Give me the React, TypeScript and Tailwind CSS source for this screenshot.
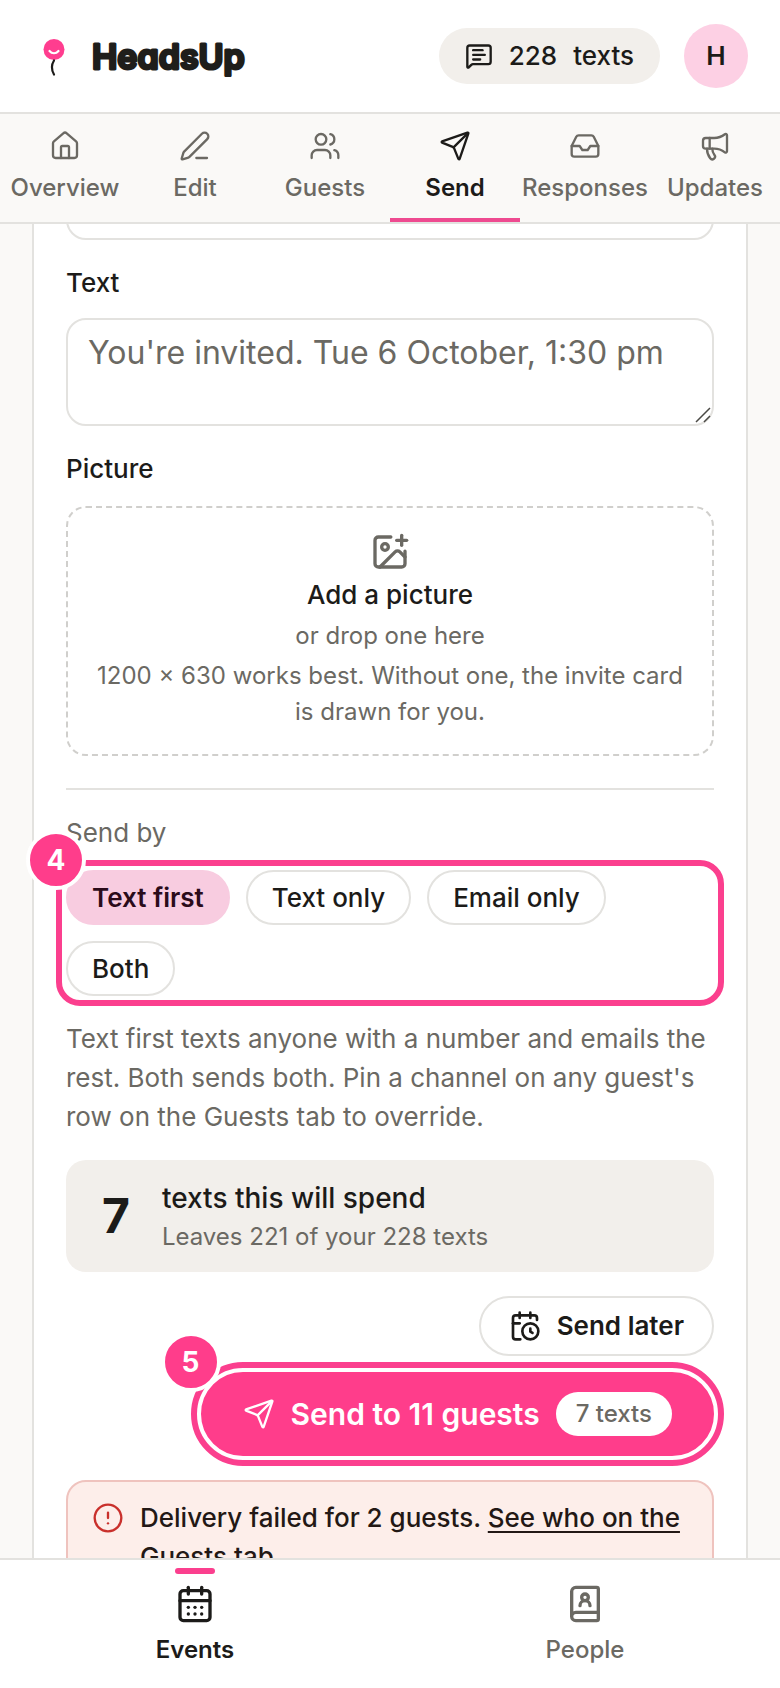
import { useState } from 'react';
import type { ReactNode } from 'react';
import {
  BookUser, CalendarClock, CalendarDays, CircleAlert, House, ImagePlus, Inbox,
  Megaphone, MessageSquareText, PenLine, Send, Users,
} from 'lucide-react';

const TABS = [
  { label: 'Overview', icon: House },
  { label: 'Edit', icon: PenLine },
  { label: 'Guests', icon: Users },
  { label: 'Send', icon: Send },
  { label: 'Responses', icon: Inbox },
  { label: 'Updates', icon: Megaphone },
];

const SECTIONS = [
  { label: 'Events', icon: CalendarDays },
  { label: 'People', icon: BookUser },
];

const CHANNELS = ['Text first', 'Text only', 'Email only', 'Both'];

function Logo() {
  return (
    <a href="#home" aria-label="HeadsUp">
      <svg width="216" height="64" viewBox="0 0 216 64">
        <circle cx="22" cy="25.5" r="10.5" fill="#ff3d8f" />
        <path d="M17.5 27c2.5 3 6.5 3 9 0" fill="none" stroke="#fff" strokeWidth="2.2" strokeLinecap="round" />
        <path d="M22 36.5c-2.8 4.5-2.6 9.5 0 14" fill="none" stroke="#1c1b19" strokeWidth="2.2" strokeLinecap="round" />
        <text
          x="60"
          y="45"
          fill="#1f1e1b"
          stroke="#1f1e1b"
          strokeWidth="3"
          strokeLinejoin="round"
          className="font-['Inter',sans-serif] text-[34px] font-semibold [font-feature-settings:'cv11']"
        >
          HeadsUp
        </text>
      </svg>
    </a>
  );
}

/* Numbered outline that points at one step of the form */
function Callout({ step, round, children }: { step: number; round?: boolean; children: ReactNode }) {
  return (
    <div className="relative">
      {children}
      <div
        className={`pointer-events-none absolute -inset-2.5 border-[6px] border-[#fb3f8e] ${round ? 'rounded-full' : 'rounded-3xl'}`}
      />
      <span className="absolute -top-10 -left-10 flex size-15 items-center justify-center rounded-full border-4 border-white bg-[#ff3d8b] text-[28px] font-bold text-white">
        {step}
      </span>
    </div>
  );
}

export default function App() {
  const [channel, setChannel] = useState('Text first');
  const [message, setMessage] = useState('');

  return (
    <div className="flex h-screen flex-col bg-[#faf9f7] font-['Inter',sans-serif] text-[26px] leading-[38px] text-[#1c1b19]">
      <header className="flex shrink-0 items-center justify-between border-b-2 border-[#e3e2df] bg-white px-8 py-6">
        <Logo />
        <div className="flex items-center gap-6">
          <a href="#texts" className="flex h-14 items-center gap-4 rounded-full bg-[#f2efeb] px-6.5 font-medium">
            <MessageSquareText size={28} strokeWidth={2} />
            <span>228</span>
            <span>texts</span>
          </a>
          <button className="size-16 rounded-full bg-[#fdd0e4] font-semibold">H</button>
        </div>
      </header>

      <nav className="grid shrink-0 grid-cols-6 border-b-2 border-[#e3e2df]">
        {TABS.map(({ label, icon: Icon }) => (
          <a
            key={label}
            href={`#${label.toLowerCase()}`}
            className={`flex flex-col items-center gap-2 border-b-4 pt-4 pb-3 text-2xl leading-9 ${
              label === 'Send' ? 'border-[#ee4a90] font-semibold' : 'border-transparent font-medium text-[#6b6963]'
            }`}
          >
            <Icon size={32} strokeWidth={1.75} />
            {label}
          </a>
        ))}
      </nav>

      <main className="min-h-0 flex-1 overflow-y-auto px-8 [scrollbar-width:none]">
        {/* The form is scrolled down to the message */}
        <form className="-mt-24 border-x-2 border-[#e3e2df] bg-white px-8 pt-6 pb-8">
          <input
            aria-label="Subject"
            className="block h-22 w-full rounded-[20px] border-2 border-[#e3e2df] px-5 text-[32px]"
          />

          <label htmlFor="text" className="mt-6 block font-medium">Text</label>
          <div className="relative mt-4">
            <textarea
              id="text"
              rows={2}
              value={message}
              onChange={(e) => setMessage(e.target.value)}
              placeholder="You're invited. Tue 6 October, 1:30 pm"
              className="block h-[108px] w-full resize-none rounded-[20px] border-2 border-[#e3e2df] px-5 py-2 text-[32px] leading-[50px] placeholder:text-[#6b6963]"
            />
            <svg className="pointer-events-none absolute right-0.5 bottom-0.5" width="18" height="18" viewBox="0 0 18 18" stroke="#4a4945" strokeWidth="1.5">
              <path d="M2 16 16 2M10 16l6-6" />
            </svg>
          </div>

          <label htmlFor="picture" className="mt-6 block font-medium">Picture</label>
          <label
            htmlFor="picture"
            className="mt-4.5 flex cursor-pointer flex-col items-center gap-1 rounded-[20px] border-2 border-dashed border-[#d0cfcc] px-6 py-6 text-center text-2xl leading-9 text-[#6b6963]"
          >
            <ImagePlus size={40} strokeWidth={2} />
            <span className="text-[26px] leading-[38px] font-medium text-[#1c1b19]">Add a picture</span>
            <span>or drop one here</span>
            <span>1200 × 630 works best. Without one, the invite card is drawn for you.</span>
          </label>
          <input id="picture" type="file" accept="image/*" className="sr-only" />

          <hr className="mt-8 border-t-2 border-[#e3e2df]" />

          <p id="send-by" className="mt-6 mb-4.5 text-[#6b6963]">Send by</p>
          <Callout step={4}>
            <div role="group" aria-labelledby="send-by" className="flex flex-wrap gap-4">
              {CHANNELS.map((name) => (
                <button
                  key={name}
                  type="button"
                  aria-pressed={channel === name}
                  onClick={() => setChannel(name)}
                  className={`rounded-full border-2 px-6 py-2 leading-[35px] ${
                    channel === name
                      ? 'border-[#f8cce0] bg-[#f8cce0] font-semibold text-[#2b0b1a]'
                      : 'border-[#e3e2df] bg-white font-medium'
                  }`}
                >
                  {name}
                </button>
              ))}
            </div>
          </Callout>
          <p className="mt-[23px] leading-[39px] text-[#6b6963]">
            Text first texts anyone with a number and emails the rest. Both sends both. Pin a channel on any guest's row
            on the Guests tab to override.
          </p>

          <div className="mt-6 flex items-center gap-8 rounded-[20px] bg-[#f2efeb] px-9 py-[17px]">
            <span className="text-5xl font-bold">7</span>
            <div>
              <p className="text-[28px] leading-[42px] font-medium">texts this will spend</p>
              <p className="text-2xl leading-9 text-[#6b6963]">Leaves 221 of your 228 texts</p>
            </div>
          </div>

          <div className="mt-6 flex flex-col items-end gap-4">
            <button
              type="button"
              className="flex h-15 items-center gap-4 rounded-full border-2 border-[#e3e2df] px-7 font-semibold"
            >
              <CalendarClock size={32} strokeWidth={2} />
              Send later
            </button>
            <Callout step={5} round>
              <button
                type="button"
                className="flex h-21 items-center gap-4 rounded-full border-2 border-[#ff3d8b] bg-[#ff3d8b] px-10 text-[30px] font-semibold text-white"
              >
                <Send size={32} strokeWidth={1.75} />
                <span>Send to 11 guests</span>
                <span className="rounded-full bg-white px-5 py-1 text-2xl leading-9 font-medium text-[#6b6963]">7 texts</span>
              </button>
            </Callout>
          </div>

          <div
            role="alert"
            className="mt-6 flex items-start gap-4 rounded-[20px] border-2 border-[#efc3be] bg-[#fdeeea] px-6 py-4 leading-[39px] font-medium text-[#231815]"
          >
            <CircleAlert size={32} strokeWidth={1.75} className="mt-1 shrink-0 text-[#c9302c]" />
            <p>
              Delivery failed for 2 guests.{' '}
              <a href="#guests" className="underline decoration-2 underline-offset-4">See who on the Guests tab</a>
            </p>
          </div>
        </form>
      </main>

      <nav className="grid shrink-0 grid-cols-2 border-t-2 border-[#e3e2df] bg-white">
        {SECTIONS.map(({ label, icon: Icon }) => (
          <a
            key={label}
            href={`#${label.toLowerCase()}`}
            className={`flex flex-col items-center pt-2 pb-5 text-2xl leading-9 ${
              label === 'Events' ? 'font-semibold' : 'font-medium text-[#6b6963]'
            }`}
          >
            <span className={`h-1.5 w-10 rounded-full ${label === 'Events' ? 'bg-[#fb3f8e]' : ''}`} />
            <Icon size={40} strokeWidth={2} className="mt-2.5 mb-2" />
            {label}
          </a>
        ))}
      </nav>
    </div>
  );
}
